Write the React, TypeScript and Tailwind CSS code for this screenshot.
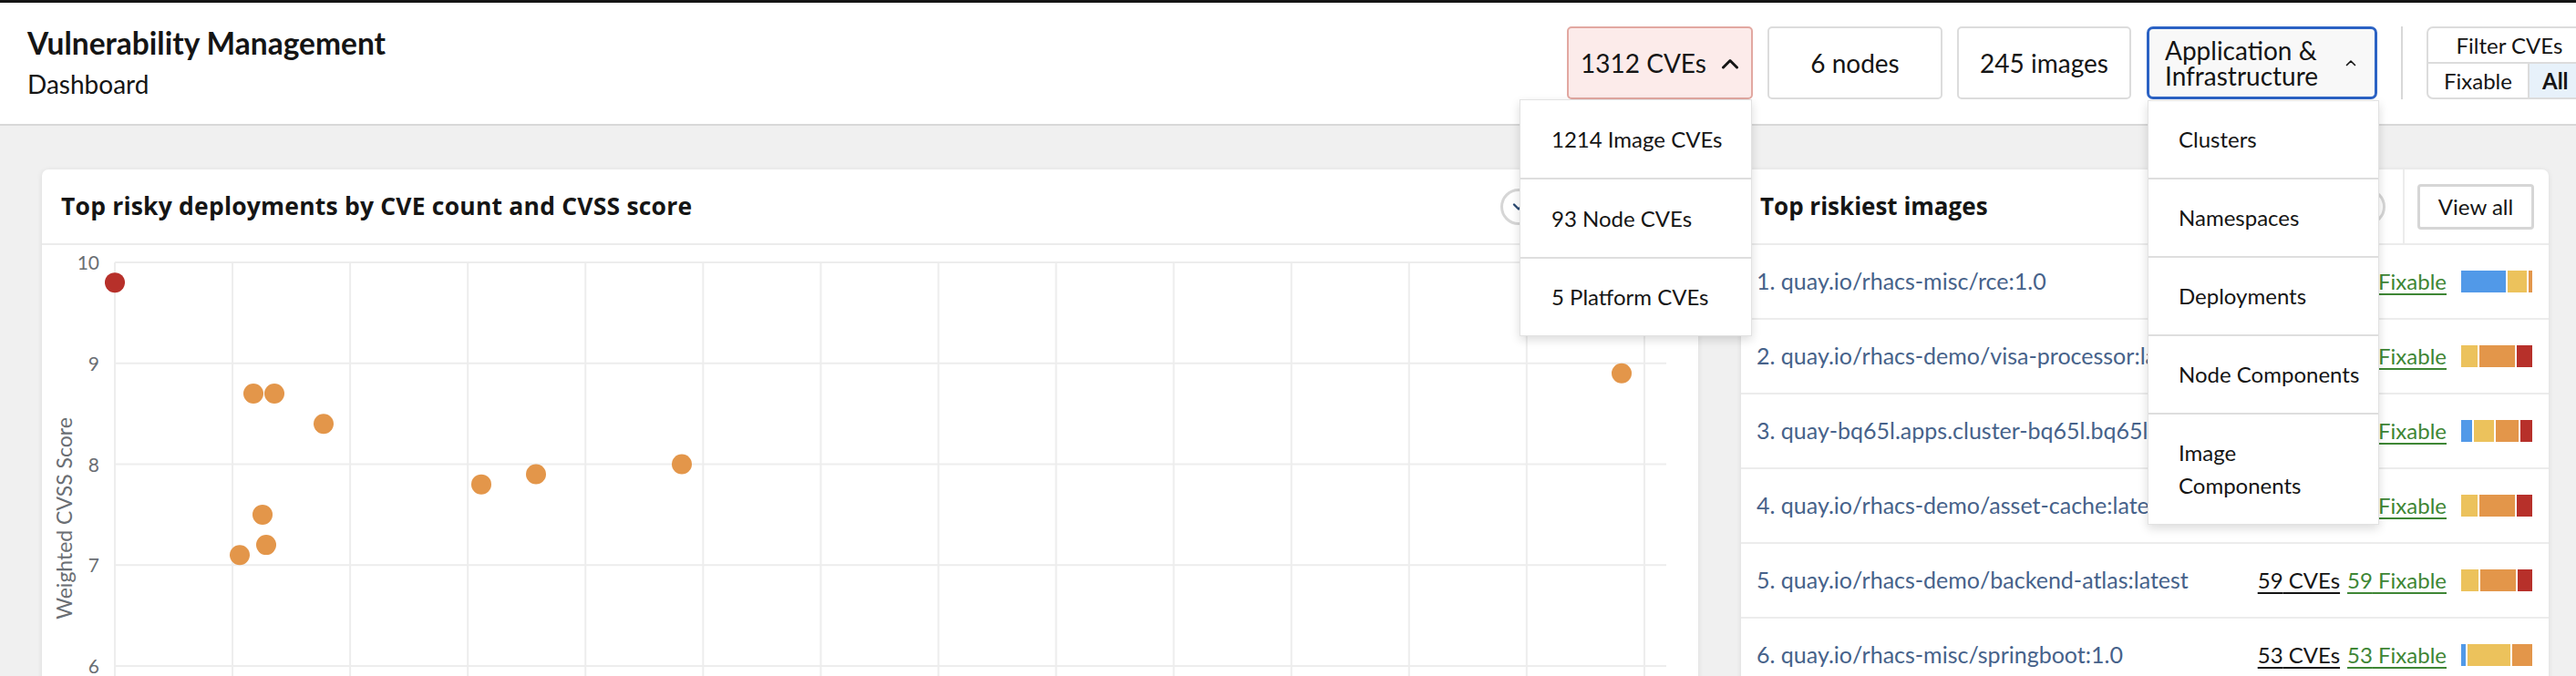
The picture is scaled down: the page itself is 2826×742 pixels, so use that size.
import React from "react";

const SEV: Record<string, string> = {
  blue: "#5199e8",
  yellow: "#ecc25c",
  orange: "#e3964a",
  red: "#b7302a",
};

type Row = {
  n: number;
  name: string;
  cves: number;
  bar: [string, number][];
};

const rows: Row[] = [
  { n: 1, name: "quay.io/rhacs-misc/rce:1.0", cves: 147, bar: [["blue", 49], ["yellow", 21], ["orange", 4]] },
  { n: 2, name: "quay.io/rhacs-demo/visa-processor:latest", cves: 88, bar: [["yellow", 18], ["orange", 39], ["red", 17]] },
  { n: 3, name: "quay-bq65l.apps.cluster-bq65l.bq65l.sandbox1234.opentlc.com/rhacs/app:latest", cves: 76, bar: [["blue", 12], ["yellow", 22], ["orange", 25], ["red", 13]] },
  { n: 4, name: "quay.io/rhacs-demo/asset-cache:latest", cves: 63, bar: [["yellow", 18], ["orange", 39], ["red", 17]] },
  { n: 5, name: "quay.io/rhacs-demo/backend-atlas:latest", cves: 59, bar: [["yellow", 19], ["orange", 39], ["red", 16]] },
  { n: 6, name: "quay.io/rhacs-misc/springboot:1.0", cves: 53, bar: [["blue", 5], ["yellow", 47], ["orange", 22]] },
];

const dots: { x: number; v: number; c: string }[] = [
  { x: 80, v: 9.8, c: "red" },
  { x: 232, v: 8.7, c: "orange" },
  { x: 255, v: 8.7, c: "orange" },
  { x: 309, v: 8.4, c: "orange" },
  { x: 242, v: 7.5, c: "orange" },
  { x: 246, v: 7.2, c: "orange" },
  { x: 217, v: 7.1, c: "orange" },
  { x: 482, v: 7.8, c: "orange" },
  { x: 542, v: 7.9, c: "orange" },
  { x: 702, v: 8.0, c: "orange" },
  { x: 1733, v: 8.9, c: "orange" },
];

const yOf = (v: number) => 19 + (10 - v) * 110.75;

function ChevronUp() {
  return (
    <svg width="20" height="13" viewBox="0 0 20 13" fill="none">
      <polyline points="2.5,11 10,3.5 17.5,11" stroke="#151515" strokeWidth="3" strokeLinecap="round" strokeLinejoin="round" />
    </svg>
  );
}

function Caret() {
  return (
    <svg width="12" height="8" viewBox="0 0 12 8" fill="none">
      <polyline points="1.5,6.5 6,2 10.5,6.5" stroke="#151515" strokeWidth="1.6" strokeLinecap="round" strokeLinejoin="round" />
    </svg>
  );
}

function CircleToggle() {
  return (
    <div className="flex h-[40px] w-[40px] shrink-0 items-center justify-center rounded-full border-[3px] border-[#d6d6d6] bg-white">
      <svg width="14" height="10" viewBox="0 0 14 10" fill="none">
        <polyline points="2,2.5 7,7.5 12,2.5" stroke="#2b4a72" strokeWidth="2.4" strokeLinecap="round" strokeLinejoin="round" />
      </svg>
    </div>
  );
}

function Chart() {
  const vx = Array.from({ length: 14 }, (_, k) => 80 + k * 129.07);
  const hy = [10, 9, 8, 7, 6];
  return (
    <svg width="1817" height="480" className="block">
      {hy.map((v) => (
        <line key={"h" + v} x1={80} x2={1782} y1={yOf(v)} y2={yOf(v)} stroke="#ededed" strokeWidth="2" />
      ))}
      {vx.map((x, i) => (
        <line key={"v" + i} x1={x} x2={x} y1={yOf(10)} y2={480} stroke="#ededed" strokeWidth="2" />
      ))}
      {hy.map((v) => (
        <text
          key={"t" + v}
          x={63}
          y={yOf(v) + 8}
          textAnchor="end"
          fontSize="21"
          fill="#6a6e73"
          fontFamily="Lato, sans-serif"
        >
          {v}
        </text>
      ))}
      <text
        x={0}
        y={0}
        transform="translate(33 300) rotate(-90)"
        textAnchor="middle"
        fontSize="23"
        fill="#6a6e73"
        fontFamily="Lato, sans-serif"
      >
        Weighted CVSS Score
      </text>
      {dots.map((d, i) => (
        <circle key={i} cx={d.x} cy={yOf(d.v)} r={11} fill={SEV[d.c]} />
      ))}
    </svg>
  );
}

export default function App() {
  return (
    <div className="relative h-[742px] w-[2826px] overflow-hidden bg-[#f0f0f0] font-['Lato',sans-serif] text-[#151515]">
      <div className="h-[3px] bg-[#151515]" />
      <header className="flex h-[135px] border-b-2 border-[#d8d8d8] bg-white pl-[30px] pt-[24px]">
        <div className="w-[1689px] shrink-0">
          <h1 className="text-[33.5px] font-bold leading-[40px]">Vulnerability Management</h1>
          <div className="mt-[5px] text-[28px] leading-[40px]">Dashboard</div>
        </div>
        <div className="mt-[2px] flex h-[80px] shrink-0 text-[28px]">
          <div className="flex w-[204px] items-center justify-center gap-[16px] rounded-[5px] border-2 border-[#e2a8a1] bg-[#fcebea]">
            <span>1312 CVEs</span>
            <ChevronUp />
          </div>
          <div className="ml-[16px] flex w-[192px] items-center justify-center rounded-[5px] border-2 border-[#dcdcdc] bg-white">
            6 nodes
          </div>
          <div className="ml-[16px] flex w-[191px] items-center justify-center rounded-[5px] border-2 border-[#dcdcdc] bg-white">
            245 images
          </div>
          <div className="ml-[17px] flex w-[253px] items-center justify-between rounded-[7px] border-[3px] border-[#2b62c4] bg-[#f8f8f8] pl-[17px] pr-[20px]">
            <span className="leading-[28px]">
              Application &amp;
              <br />
              Infrastructure
            </span>
            <Caret />
          </div>
          <div className="ml-[26px] w-[2px] bg-[#d8d8d8]" />
          <div className="ml-[26px] flex w-[182px] flex-col overflow-hidden rounded-[7px] border-2 border-[#dcdcdc] bg-white text-[24px]">
            <div className="flex h-[39px] items-center justify-center border-b-2 border-[#dcdcdc]">Filter CVEs</div>
            <div className="flex flex-1">
              <div className="flex w-[111px] items-center justify-center border-r-2 border-[#dcdcdc]">Fixable</div>
              <div className="flex flex-1 items-center bg-[#e7f1fa] pl-[14px] font-bold">All</div>
            </div>
          </div>
        </div>
      </header>

      <main className="flex gap-[47px] pl-[46px] pt-[48px]">
        <section className="h-[620px] w-[1817px] shrink-0 overflow-hidden rounded-[7px] bg-white shadow-[0_1px_6px_rgba(0,0,0,0.09)]">
          <div className="flex h-[83px] items-center border-b-2 border-[#ececec] pl-[21px] pr-[177px]">
            <h2 className="flex-1 font-['Open_Sans',sans-serif] text-[26.5px] font-bold tracking-[0.2px]">
              Top risky deployments by CVE count and CVSS score
            </h2>
            <CircleToggle />
          </div>
          <Chart />
        </section>

        <section className="h-[620px] w-[886px] shrink-0 overflow-hidden rounded-[7px] bg-white shadow-[0_1px_6px_rgba(0,0,0,0.09)]">
          <div className="flex h-[83px] items-stretch border-b-2 border-[#ececec] pl-[21px]">
            <h2 className="flex flex-1 items-center font-['Open_Sans',sans-serif] text-[26px] font-bold">
              Top riskiest images
            </h2>
            <div className="flex items-center pr-[19px]">
              <CircleToggle />
            </div>
            <div className="w-[2px] bg-[#ececec]" />
            <div className="flex items-center pl-[14px] pr-[16px]">
              <div className="flex h-[50px] w-[128px] items-center justify-center rounded-[4px] border-[3px] border-[#d6d6d6] text-[24px]">
                View all
              </div>
            </div>
          </div>
          {rows.map((r) => (
            <div key={r.n} className="flex h-[82px] items-center border-b-2 border-[#ececec] pl-[17px] pr-[18px] text-[24px]">
              <span className="min-w-0 flex-1 truncate text-[25px] text-[#46628a]">
                {r.n}. {r.name}
              </span>
              <span className="ml-[12px] underline decoration-2 underline-offset-4">{r.cves} CVEs</span>
              <span className="ml-[8px] text-[#3e8635] underline decoration-2 underline-offset-4">{r.cves} Fixable</span>
              <div className="ml-[16px] flex h-[24px] w-[78px] gap-[2px]">
                {r.bar.map(([c, w], i) => (
                  <div key={i} className="h-full" style={{ width: w, backgroundColor: SEV[c] }} />
                ))}
              </div>
            </div>
          ))}
        </section>
      </main>

      {/* CVE type menu */}
      <div className="absolute left-[1667px] top-[109px] w-[255px] border border-[#e2e2e2] bg-white text-[24px] shadow-[0_4px_10px_rgba(0,0,0,0.14)]">
        <div className="flex h-[87px] items-center border-b-2 border-[#dedede] pl-[34px]">1214 Image CVEs</div>
        <div className="flex h-[87px] items-center border-b-2 border-[#dedede] pl-[34px]">93 Node CVEs</div>
        <div className="flex h-[84px] items-center pl-[34px]">5 Platform CVEs</div>
      </div>

      {/* Entity menu */}
      <div className="absolute left-[2356px] top-[110px] w-[254px] border border-[#e2e2e2] bg-white text-[24px] shadow-[0_4px_10px_rgba(0,0,0,0.14)]">
        <div className="flex h-[86px] items-center border-b-2 border-[#dedede] pl-[33px]">Clusters</div>
        <div className="flex h-[86px] items-center border-b-2 border-[#dedede] pl-[33px]">Namespaces</div>
        <div className="flex h-[86px] items-center border-b-2 border-[#dedede] pl-[33px]">Deployments</div>
        <div className="flex h-[86px] items-center border-b-2 border-[#dedede] pl-[33px]">Node Components</div>
        <div className="flex h-[120px] flex-col justify-center pl-[33px] leading-[36px]">
          <span>Image</span>
          <span>Components</span>
        </div>
      </div>
    </div>
  );
}
